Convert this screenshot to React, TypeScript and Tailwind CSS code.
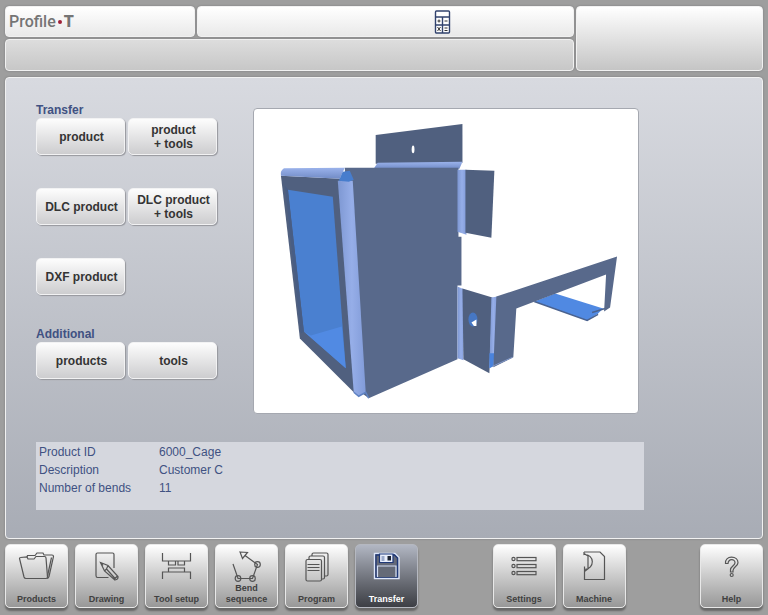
import clsx from "clsx";
import {useState} from "react";
import type {ReactNode} from "react";

const products = [
 {id: 1, name: "Product ID", value: "6000_Cage"},
 {id: 2, name: "Description", value: "Customer C"},
 {id: 3, name: "Number of bends", value: "11"},
];

const icons: Record<string, ReactNode> = {
 Products: (
  <>
   <path d="M1.500 10.500Q1.500 9.500 2.500 9.500L9 9l1 2h6l2-2.500h8.500Q28 8.500 28 10L29.500 29Q29.500 30.500 28 30.500H8Q6.500 30.500 6 29Z" />
   <path d="M9 9l.5-1.500h7.500l2-2.500h6l1 2h8Q35.500 7 35.500 8.500L31 28.500Q30.500 30.500 28.500 30.500M33.500 9.500 29.500 28" />
  </>
 ),
 Drawing: (
  <>
   <path d="M26 20V6.500Q26 5 24.500 5H9.500Q8 5 8 6.500V27.500Q8 29.500 9.500 29.500H20.500" />
   <path d="M12.500 14.500 20 17.500 30 28.500Q30.500 31.500 27 32L16.500 23ZM20 17.500 18.500 21 16.500 23M12.500 14.500 15 17.500M18.500 21 27 30.500M26 31.500l3.500-3.500" />
  </>
 ),
 "Tool setup": (
  <path d="M4.500 5V13H32.500V5M10.500 13v4H17.500v-4M20 13v4h6.500v-4M4.500 31V24H32.500v7M10.500 24V20H26.500v4" />
 ),
 "Bend sequence": (
  <>
   <path d="M5 16 10 30.500H24.500L29.500 16.500 17 7.500M12 4l7.500 .5-5 6Z" />
   <circle cx="10" cy="30.500" r="2.800" />
   <circle cx="24.500" cy="30.500" r="2.800" />
   <circle cx="29.500" cy="16.500" r="2.800" />
  </>
 ),
 Program: (
  <>
   <path d="M14 8V6.500Q14 5 15.500 5H28.500Q30 5 30 6.500V26.500Q30 28 28.500 28H27" />
   <path d="M11 11.500V9.500Q11 8 12.500 8H25Q26.500 8 26.500 9.500V29.500Q26.500 31 25 31H23.500" />
   <rect x="8" y="11.500" width="15.500" height="21.500" rx="1.500" />
   <path d="M9.500 16.500H21.500M9.500 19.500H21.500M9.500 22.500H21.500" />
  </>
 ),
 Transfer: (
  <>
   <path d="M6.500 5.500H27L31 9.500V30.500H6.500Z" fill="#646978" stroke="#dde6fb" strokeWidth="1.400" />
   <path d="M8 7H26.500L29.500 10V29H8Z" stroke="#1f3878" strokeWidth="1.300" />
   <path d="M11.500 6H25V14.500H11.500Z" fill="#e9effd" stroke="#1f3878" />
   <path d="M13.500 8h3v5h-3z" fill="#9aa9cb" stroke="none" />
   <path d="M19.500 8h3.500v4.500h-3.500z" fill="#1b2233" stroke="none" />
   <path d="M9.500 29V18H28V29" fill="#656a77" stroke="#d3def5" />
  </>
 ),
 Settings: (
  <>
   {[9, 16, 23].map((y) => (
    <g key={y}>
     <circle cx="7.500" cy={y + 2} r="1.600" />
     <rect x="11" y={y + 0.5} width="19" height="3.200" />
    </g>
   ))}
  </>
 ),
 Machine: (
  <path d="M8 4H24L28.500 8.500V31.500H8.500V23.500L13 20M8 4V6.500C19 6 19 21 8.500 21.500V18.500M12 8V20M8 5.500 12 8M8.500 21.500V24" />
 ),
 Help: (
  <>
   <path d="M12.500 15.500C12 11.500 15 9.200 18.500 9.200C22.500 9.200 25 11.500 25 14.700C25 18 20 19 20 22.500V24H17.500V21.500C17.500 18.500 22 17.500 22 14.800C22 10.500 15.500 10.500 15 15.500Z" />
   <circle cx="18.700" cy="27" r="1.500" />
  </>
 ),
};

const panel = "rounded border border-[#f1f1f1] shadow-[0_0_2px_#77777a]";
const soft = "bg-linear-to-b from-[#dddddd] to-[#c7c7c7]";
const bright = "bg-linear-to-b from-white to-[#e9e9e9]";

function ActionButton({children}: {children: ReactNode}) {
 return (
  <button
   type="button"
   className="h-[37px] w-[89px] rounded-[5px] border border-[#f2f2f3] bg-linear-to-b from-[#fdfdfd] to-[#cdcdcf] pl-0.5 text-xs leading-[14px] font-bold whitespace-pre-line text-[#343434] shadow-[1px_1px_1px_#96979d]"
  >
   {children}
  </button>
 );
}

function NavButton({name, active, onClick}: {name: string; active: boolean; onClick: () => void}) {
 return (
  <button
   type="button"
   onClick={onClick}
   className={clsx(
    "flex h-16 w-[63px] shrink-0 flex-col items-center justify-between rounded-[5px] border pt-[3px] pb-0.5 text-[9px] leading-[11px] font-bold shadow-[0_3px_2px_#686868]",
    active
     ? "border-[#b5b8c0] bg-linear-to-b from-[#b2b7c3] to-[#3d3f45] text-white"
     : "border-[#e8e8e8] bg-linear-to-b from-white to-[#989898] text-[#404040]"
   )}
  >
   <svg
    viewBox="0 0 37 34"
    className="h-[34px] w-[37px] shrink-0"
    fill="none"
    stroke="#555"
    strokeWidth="1.200"
    aria-hidden="true"
   >
    {icons[name]}
   </svg>
   <span className={clsx("w-12", name === "Bend sequence" && "-mt-2")}>{name}</span>
  </button>
 );
}

function CagePreview() {
 return (
  <svg viewBox="254 108 385 305" className="block w-full" role="img" aria-label="6000_Cage">
   <defs>
    <linearGradient id="bend" x1="0" x2="1" y1="0" y2="0">
     <stop offset="0" stopColor="#7d97d2" />
     <stop offset="0.5" stopColor="#96aee8" />
     <stop offset="1" stopColor="#819bd8" />
    </linearGradient>
    <linearGradient id="fold" x1="0" x2="0" y1="0" y2="1">
     <stop offset="0" stopColor="#9ab2eb" />
     <stop offset="1" stopColor="#718bc6" />
    </linearGradient>
   </defs>
   {/* top flange */}
   <path d="M376 134 463 123V162L376 163Z" fill="#50607f" />
   <ellipse cx="413.500" cy="148.500" rx="1.400" ry="3.800" fill="#fff" />
   <path d="M378 162 463 161 460 168H374Z" fill="url(#fold)" />
   {/* side face */}
   <path d="M345 167H459V236H462V285H458V359L369 398 361 392Z" fill="#58698b" />
   {/* front frame */}
   <path d="M281 175 341 178 362 393 354 392 300 338Z" fill="#50607f" />
   <path d="M288 189 333 196 346 368 304 331Z" fill="#4a80d0" />
   <path d="M311 335 342 326 346 368 304 331Z" fill="#518ae3" />
   <path d="M288 189 304 331 301 333 285 185Z" fill="#485d84" />
   <path d="M284 167.500 345 167 340 178 281 175Q280 170 284 167.500Z" fill="url(#fold)" />
   <path d="M338 180 353 180 366 392 359 396 354 392Z" fill="url(#bend)" />
   <path d="M339 180 343 171 350 170 354 179 349 181Z" fill="#477dcd" />
   <path d="M354 392 359 396 366 392 369 398" fill="none" stroke="#5f82c3" strokeWidth="1.500" />
   {/* upper right flange */}
   <path d="M458 169H467V234L458 231Z" fill="url(#bend)" />
   <path d="M466 169 495 170 492 237 466 232Z" fill="#50607f" />
   {/* lower right flange */}
   <path d="M458 286 465 289 464 360 458 358Z" fill="url(#bend)" />
   <path d="M463 288 493 297 490 373 464 359Z" fill="#50607f" />
   <ellipse cx="473.500" cy="319" rx="4.500" ry="7" fill="#4677c4" />
   <path d="M472 322 477 319V325.500H474.500Z" fill="#fff" />
   <path d="M492 297 498 296 495 365 490 368Z" fill="url(#bend)" />
   <path d="M490 353 495 353 494 366 490 368Z" fill="#4a83dd" />
   {/* bracket arm */}
   <path d="M535 301 556 293 604 308 599 313 588 320Z" fill="#5089e2" />
   <path d="M535 301 588 320 599 314M593 312 606 308" fill="none" stroke="#4a628f" strokeWidth="1.400" />
   <path d="M497 296 618 256 611 307 605 311 607 274 517 308 514 357 494 367Z" fill="#58698b" />
   <path d="M493 366 513 357" stroke="#8097c7" />
  </svg>
 );
}

export default function App() {
 const [page, setPage] = useState("Transfer");

 const navButton = (name: string) => (
  <NavButton key={name} name={name} active={page === name} onClick={() => setPage(name)} />
 );

 return (
  <div className="flex min-h-screen flex-col bg-[#9e9e9e] px-[5px] pt-1.5 pb-[7px] font-['Liberation_Sans',Arial,sans-serif]">
   <header className="flex gap-0.5">
    <div className="flex w-3/4 shrink-0 flex-col gap-0.5">
     <div className="flex gap-0.5">
      <div className={clsx(panel, bright, "flex h-[31px] w-1/3 items-center pl-[3px]")}>
       <h1 className="flex items-center font-[Roboto,sans-serif] text-base leading-5 font-medium text-[#757575]">
        Profile
        <span className="mx-0.5 size-1 rounded-full bg-[#a02038]" />
        <span className="font-black">T</span>
       </h1>
      </div>
      <div className={clsx(panel, bright, "flex h-[31px] flex-1 items-center justify-end pr-[122px]")}>
       <button type="button" aria-label="Calculator">
        <svg viewBox="0 0 17 24" className="block h-6 w-[17px]" fill="none" stroke="#32436e" strokeWidth="1.400">
         <rect x="1.500" y="1" width="14" height="22" rx="1" fill="#fff" />
         <path d="M1.500 7H15.500M1.500 15H15.500M8.500 7V23" />
         <path
          d="M3.500 11h3M5 9.500v3M10.500 11h3M3.500 17l3 4M6.500 17l-3 4M10.500 18h3M10.500 20.500h3"
          stroke="#333"
          strokeWidth="1"
         />
        </svg>
       </button>
      </div>
     </div>
     <div className={clsx(panel, soft, "h-8")} />
    </div>
    <div className={clsx(panel, "flex-1 bg-linear-to-b from-white to-[#c5c5c5]")} />
   </header>

   <main
    className={clsx(
     panel,
     "mt-1.5 flex flex-1 flex-col bg-linear-to-b from-[#d8dae0] to-[#a8acb5] pt-[30px] pr-[118px] pb-7 pl-[30px]"
    )}
   >
    <div className="flex flex-1 items-start gap-9">
     <div className="shrink-0">
      <h2 className="-mt-1.5 text-xs leading-4 font-bold text-[#405182]">Transfer</h2>
      <div className="grid grid-cols-2 gap-x-[3px] gap-y-[33px]">
       <ActionButton>product</ActionButton>
       <ActionButton>{"product\n+ tools"}</ActionButton>
       <ActionButton>DLC product</ActionButton>
       <ActionButton>{"DLC product\n+ tools"}</ActionButton>
       <ActionButton>DXF product</ActionButton>
      </div>
      <h2 className="mt-[31px] text-xs leading-4 font-bold text-[#405182]">Additional</h2>
      <div className="grid grid-cols-2 gap-x-[3px]">
       <ActionButton>products</ActionButton>
       <ActionButton>tools</ActionButton>
      </div>
     </div>
     <div className="mr-[5px] flex-1 overflow-hidden rounded border border-[#a5a8b0] bg-white">
      <CagePreview />
     </div>
    </div>

    <div className="h-[68px] bg-[#d5d7de] px-[3px] py-px">
     <table className="text-left text-xs leading-[18px] text-[#405182]">
      <tbody>
       {products.map((e) => (
        <tr key={e.id}>
         <th scope="row" className="w-[120px] p-0 font-normal">
          {e.name}
         </th>
         <td className="p-0">{e.value}</td>
        </tr>
       ))}
      </tbody>
     </table>
    </div>
   </main>

   <nav className="mt-[5px] flex justify-between">
    <div className="flex gap-[7px]">
     {["Products", "Drawing", "Tool setup", "Bend sequence", "Program", "Transfer"].map(navButton)}
    </div>
    <div className="flex gap-[7px]">{["Settings", "Machine"].map(navButton)}</div>
    {navButton("Help")}
   </nav>
  </div>
 );
}
